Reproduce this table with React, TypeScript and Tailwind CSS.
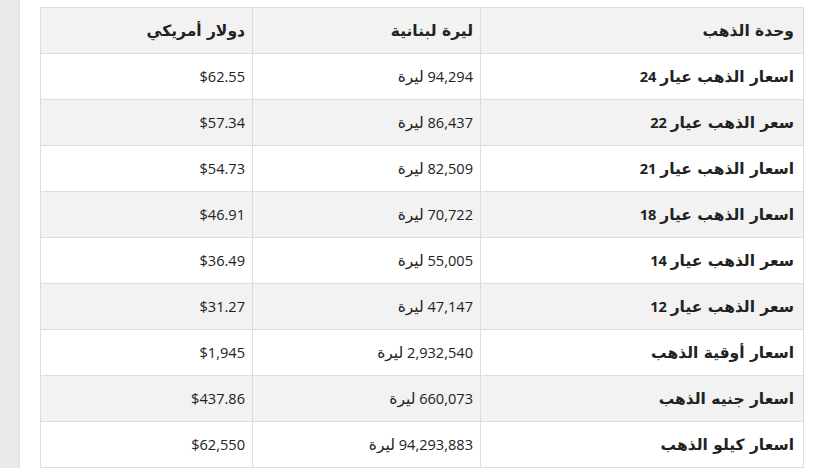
const rows = [
  { unit: "اسعار الذهب عيار", n: "24", lbp: "94,294", usd: "$62.55" },
  { unit: "سعر الذهب عيار", n: "22", lbp: "86,437", usd: "$57.34" },
  { unit: "اسعار الذهب عيار", n: "21", lbp: "82,509", usd: "$54.73" },
  { unit: "اسعار الذهب عيار", n: "18", lbp: "70,722", usd: "$46.91" },
  { unit: "سعر الذهب عيار", n: "14", lbp: "55,005", usd: "$36.49" },
  { unit: "سعر الذهب عيار", n: "12", lbp: "47,147", usd: "$31.27" },
  { unit: "اسعار أوقية الذهب", n: "", lbp: "2,932,540", usd: "$1,945" },
  { unit: "اسعار جنيه الذهب", n: "", lbp: "660,073", usd: "$437.86" },
  { unit: "اسعار كيلو الذهب", n: "", lbp: "94,293,883", usd: "$62,550" },
]

const cell = "border border-[#dddddd] h-[46px] text-right align-middle"
const first = `${cell} px-[9px]`
const rest = `${cell} pr-[7px] pl-[9px]`
const ar = "font-['DejaVu_Sans'] text-[15.5px]"

export default function App() {
  return (
    <div
      className="flex min-h-[468px] bg-white text-[14.6px] leading-[21px] text-[#222222]"
      style={{ fontFamily: '"Open Sans", "DejaVu Sans", sans-serif' }}
    >
      <div className="w-[20px] shrink-0 border-r border-[#e2e0e1] bg-[#ebe9ea]" />
      <div className="pl-[20px] pt-[7px]">
        <table dir="rtl" className="w-[764px] border-collapse">
          <thead>
            <tr className="bg-[#f2f2f2]">
              <th className={`${first} w-[323px] font-bold`}>
                <span className={ar}>وحدة الذهب</span>
              </th>
              <th className={`${rest} w-[228px] font-bold`}>
                <span className={ar}>ليرة لبنانية</span>
              </th>
              <th className={`${rest} font-bold`}>
                <span className={ar}>دولار أمريكي</span>
              </th>
            </tr>
          </thead>
          <tbody>
            {rows.map((r, i) => (
              <tr key={r.unit + r.n} className={i % 2 === 1 ? "bg-[#f2f2f2]" : "bg-white"}>
                <td className={`${first} font-bold`}>
                  <span className={ar}>{r.unit}</span>
                  {r.n && <span> {r.n}</span>}
                </td>
                <td className={rest}>
                  {r.lbp} <span className={ar}>ليرة</span>
                </td>
                <td className={rest} dir="ltr">
                  {r.usd}
                </td>
              </tr>
            ))}
          </tbody>
        </table>
      </div>
    </div>
  )
}
